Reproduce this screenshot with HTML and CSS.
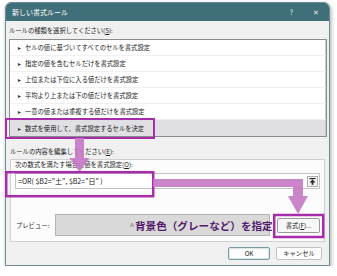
FILE: index.html
```html
<!DOCTYPE html>
<html lang="ja">
<head>
    <meta charset="UTF-8">
    <meta name="viewport" content="width=device-width, initial-scale=1.0">
    <title>新しい書式ルール</title>
    <link rel="stylesheet" href="styles.css">
</head>
<body>
    <div class="dialog">
        <div class="titlebar">
            <span class="title">新しい書式ルール</span>
            <span class="controls"><span>?</span><span class="close">✕</span></span>
        </div>
        <div class="content">
            <div class="label first">ルールの種類を選択してください(<u>S</u>):</div>
            <ul class="rules">
                <li><span class="tri">►</span>セルの値に基づいてすべてのセルを書式設定</li>
                <li><span class="tri">►</span>指定の値を含むセルだけを書式設定</li>
                <li><span class="tri">►</span>上位または下位に入る値だけを書式設定</li>
                <li><span class="tri">►</span>平均より上または下の値だけを書式設定</li>
                <li><span class="tri">►</span>一意の値または重複する値だけを書式設定</li>
                <li class="selected"><span class="tri">►</span>数式を使用して、書式設定するセルを決定</li>
            </ul>
            <div class="label second">ルールの内容を編集してください(<u>E</u>):</div>
            <div class="group">
                <div class="label inner">次の数式を満たす場合に値を書式設定(<u>O</u>):</div>
                <div class="formula">
                    <span class="formula-text">=OR( $B2="土", $B2="日" )</span>
                    <span class="pick">
                        <svg width="7" height="7" viewBox="0 0 7 7">
                            <rect x="0.5" y="0" width="6" height="1.2" fill="#222"/>
                            <polygon points="3.5,1.6 6.5,4.4 0.5,4.4" fill="#222"/>
                            <rect x="2.6" y="4.2" width="1.8" height="2.6" fill="#222"/>
                        </svg>
                    </span>
                </div>
                <div class="preview-row">
                    <span class="preview-label">プレビュー:</span>
                    <div class="preview"><span class="sample">A</span></div>
                    <button class="btn format">書式(<u>F</u>)...</button>
                </div>
            </div>
            <div class="actions">
                <button class="btn ok">OK</button>
                <button class="btn cancel">キャンセル</button>
            </div>
        </div>
    </div>

    <div class="note">背景色（グレーなど）を指定</div>

    <svg class="marks" width="337" height="276" viewBox="0 0 337 276">
        <rect x="6" y="119" width="148" height="19" fill="none" stroke="#a62cab" stroke-width="2"/>
        <polygon points="75,138 84,138 84,158 89.5,158 79.5,172 69.5,158 75,158" fill="#c47ac6" opacity="0.92"/>
        <rect x="6.2" y="172.2" width="147" height="24" fill="none" stroke="#a62cab" stroke-width="2.5"/>
        <polygon points="153,179 303,179 303,196 308,196 298,214 288,196 293,196 293,187 153,187" fill="#c47ac6" opacity="0.92"/>
        <rect x="274.2" y="215" width="49" height="22" fill="none" stroke="#a62cab" stroke-width="2.5"/>
    </svg>
</body>
</html>
```

FILE: styles.css
```css
body {
    margin: 0;
    background: #ffffff;
    font-family: "Noto Sans CJK JP", "Noto Sans", sans-serif;
    font-size: 6.3px;
    color: #1a1a1a;
}

.dialog {
    width: 325px;
    height: 264px;
    margin: 2px 0 0 5px;
    box-sizing: border-box;
    border: 1px solid #6d8c93;
    border-radius: 6px 6px 0 0;
    background: #f0f0f0;
    box-shadow: 1px 2px 4px rgba(0, 0, 0, 0.35);
    overflow: hidden;
}

.titlebar {
    height: 18px;
    background: #3f6f79;
    color: #ffffff;
    display: flex;
    align-items: center;
    justify-content: space-between;
    padding: 0 10px 0 6px;
    font-size: 7px;
}

.controls {
    display: flex;
    gap: 20px;
    font-size: 7px;
    color: #e8eef0;
}

.content {
    padding: 0 2px 0 3px;
}

.label {
    line-height: 10px;
    white-space: nowrap;
}

.label u {
    text-decoration: underline;
}

.label.first {
    margin-top: 5px;
}

.label.second {
    margin-top: 10px;
    margin-left: 1px;
}

.label.inner {
    margin-left: 4px;
}

.rules {
    list-style: none;
    margin: 3px 0 0 0;
    padding: 0;
    height: 98px;
    box-sizing: border-box;
    background: #ffffff;
    border: 1px solid #8c8c8c;
    box-shadow: inset -1px -1px 0 #c8c8c8;
}

.rules li {
    height: 16px;
    box-sizing: border-box;
    border-bottom: 1px solid #f0f0f0;
    display: flex;
    align-items: center;
    padding-left: 7px;
    white-space: nowrap;
}

.rules li:last-child {
    border-bottom: none;
}

.rules li.selected {
    background: #e0dfe3;
    margin-right: 1px;
}

.tri {
    font-size: 5px;
    margin-right: 3px;
    color: #333;
}

.group {
    margin: 2px 2px 0 1px;
    height: 83px;
    box-sizing: border-box;
    border: 1px solid #d0d0d0;
    background: #fcfcfc;
}

.formula {
    margin: 3px 4px 0 4px;
    height: 16px;
    box-sizing: border-box;
    border: 1px solid #c4c4c4;
    background: #ffffff;
    display: flex;
    align-items: center;
    justify-content: space-between;
    padding: 0 1px 0 2px;
}

.formula-text {
    font-size: 7px;
    white-space: nowrap;
}

.pick {
    width: 11px;
    height: 11px;
    box-sizing: border-box;
    border: 1px solid #adadad;
    background: #f4f4f4;
    display: flex;
    align-items: center;
    justify-content: center;
}

.preview-row {
    display: flex;
    align-items: center;
    margin-top: 25px;
    padding-left: 5px;
}

.preview-label {
    width: 39px;
    white-space: nowrap;
}

.preview {
    width: 215px;
    height: 22px;
    box-sizing: border-box;
    border: 1px solid #b4b4b4;
    background: #d9d9d9;
    display: flex;
    align-items: center;
    padding-left: 74px;
}

.sample {
    font-family: "Liberation Sans", sans-serif;
    font-size: 6px;
    color: #6a6a6a;
}

.btn {
    font-family: "Noto Sans CJK JP", "Noto Sans", sans-serif;
    font-size: 6.3px;
    color: #1a1a1a;
    background: #fdfdfd;
    border: 1px solid #c2c2c2;
    border-radius: 2px;
    padding: 0;
    height: 13px;
    line-height: 11px;
}

.btn.format {
    width: 43px;
    height: 15px;
    margin-left: 7px;
    background: #f7f7f7;
    border-color: #9a9a9a;
}

.actions {
    display: flex;
    justify-content: flex-end;
    gap: 6px;
    margin: 5px 5px 0 0;
}

.btn.ok {
    width: 42px;
    border-color: #7a9aa4;
    box-shadow: inset 0 0 0 1px #dbe6ea;
}

.btn.cancel {
    width: 46px;
}

.note {
    position: absolute;
    left: 135px;
    top: 219px;
    font-size: 10.6px;
    font-weight: bold;
    line-height: 14px;
    color: #561a6e;
    white-space: nowrap;
}

.marks {
    position: absolute;
    left: 0;
    top: 0;
    pointer-events: none;
}
```
